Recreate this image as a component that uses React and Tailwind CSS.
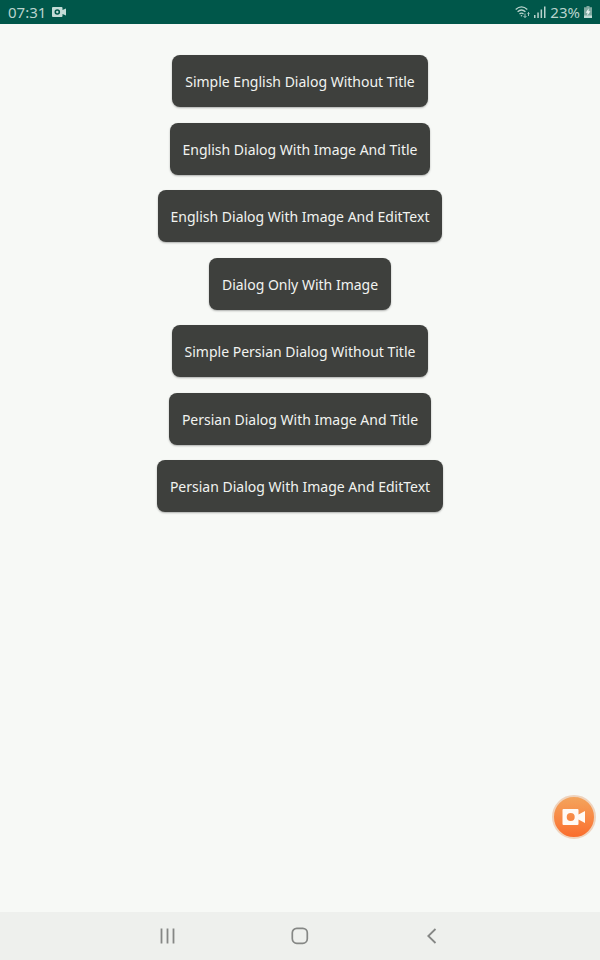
const dialogs = [
  'Simple English Dialog Without Title',
  'English Dialog With Image And Title',
  'English Dialog With Image And EditText',
  'Dialog Only With Image',
  'Simple Persian Dialog Without Title',
  'Persian Dialog With Image And Title',
  'Persian Dialog With Image And EditText',
];

function StatusBar() {
  return (
    <header className="flex h-6 items-center justify-between bg-[#00574a] pr-2 pl-2 text-[15px] leading-6 text-[#b9d3cd]">
      <div className="flex items-center gap-[6px]">
        <time>07:31</time>
        <svg width="14" height="12" viewBox="0 0 14 12" fill="#c3dcd7" aria-hidden="true">
          <path fillRule="evenodd" d="M1 1h8.500q1 0 1 1v2L14 2.500v7L10.500 8v2q0 1-1 1H1q-1 0-1-1V2q0-1 1-1zM5.300 3.200a2.800 2.800 0 1 0 0 5.600a2.800 2.800 0 1 0 0-5.600z" />
          <circle cx="5.300" cy="6" r="1.200" />
        </svg>
      </div>
      <div className="flex items-center gap-1">
        <svg width="15" height="14" viewBox="0 0 15 14" fill="none" stroke="#b9d3cd" strokeWidth="1.300" aria-hidden="true">
          <path d="M.7 4.500Q6.500-.8 12.300 4.500M2.600 6.800Q6.500 3.300 10.400 6.800M4.500 9Q6.500 7.300 8.500 9" />
          <circle cx="6.500" cy="10.800" r=".8" fill="#b9d3cd" stroke="none" />
          <path d="M10 8.500v4M8.500 11l1.500 1.500 1.500-1.500M13.500 11V7.500M12.500 8.500l1-1 1 1" strokeWidth=".9" />
        </svg>
        <svg width="12" height="12" viewBox="0 0 12 12" fill="#b9d3cd" aria-hidden="true">
          <path d="M0 9h1.500v3H0zM3.300 6.500h1.500V12H3.300zM6.600 3.500h1.500V12H6.600zM10 .5h1.500V12H10z" />
        </svg>
        <span>23%</span>
        <svg width="8" height="12" viewBox="0 0 8 12" aria-hidden="true">
          <path d="M2.500 0h3v1.200H8V12H0V1.200h2.500z" fill="#7fa9a0" />
          <path d="M0 9.500h8V12H0z" fill="#c3dcd7" />
          <path d="M4.700 2.300 1.700 6.700h1.800L3.200 9.800l3.200-4.500H4.500z" fill="#edf7f4" />
        </svg>
      </div>
    </header>
  );
}

function NavigationBar() {
  const key = 'flex h-12 w-[132px] items-center justify-center';
  return (
    <nav className="flex h-12 justify-center bg-[#eef0ed]">
      <button className={key} aria-label="Recent apps">
        <svg width="16" height="16" viewBox="0 0 16 16" fill="none" stroke="#858785" strokeWidth="1.800">
          <path d="M1.500.5v15M7.500.5v15M13.500.5v15" />
        </svg>
      </button>
      <button className={key} aria-label="Home">
        <svg width="18" height="18" viewBox="0 0 18 18" fill="none" stroke="#858785" strokeWidth="1.700">
          <rect x="1.300" y="1.300" width="15" height="15" rx="4.500" />
        </svg>
      </button>
      <button className={key} aria-label="Back">
        <svg width="10" height="16" viewBox="0 0 10 16" fill="none" stroke="#858785" strokeWidth="1.800">
          <path d="M8.500 1 1.300 8l7.200 7" />
        </svg>
      </button>
    </nav>
  );
}

export default function App() {
  return (
    <div className="relative flex min-h-screen flex-col bg-[#f7f9f6] font-['Noto_Sans',sans-serif]">
      <StatusBar />
      <main className="flex-1 px-4 pt-[31px] pb-8">
        <div className="flex min-h-[457px] flex-col items-center justify-between">
          {dialogs.map((label) => (
            <button
              key={label}
              className="h-[52px] rounded-lg bg-[#3e403d] px-[13px] pt-[2px] text-sm text-[#f1f3f0] shadow-[0_1px_2px_rgba(0,0,0,0.3)]"
            >
              {label}
            </button>
          ))}
        </div>
      </main>
      <button
        aria-label="Record screen"
        className="absolute right-1 bottom-[121px] flex size-11 items-center justify-center rounded-full border-2 border-[#efd3bd] bg-linear-to-b from-[#f3a45c] to-[#fa6d2c]"
      >
        <svg width="24" height="16" viewBox="0 0 24 16" fill="#fffaf5">
          <path fillRule="evenodd" d="M1.500 0h14q1 0 1 1v4.500L23 2v12l-6.500-3.500V15q0 1-1 1h-14q-1 0-1-1V1q0-1 1-1zM8.700 4a4 4 0 1 0 0 8a4 4 0 1 0 0-8z" />
        </svg>
      </button>
      <NavigationBar />
    </div>
  );
}
